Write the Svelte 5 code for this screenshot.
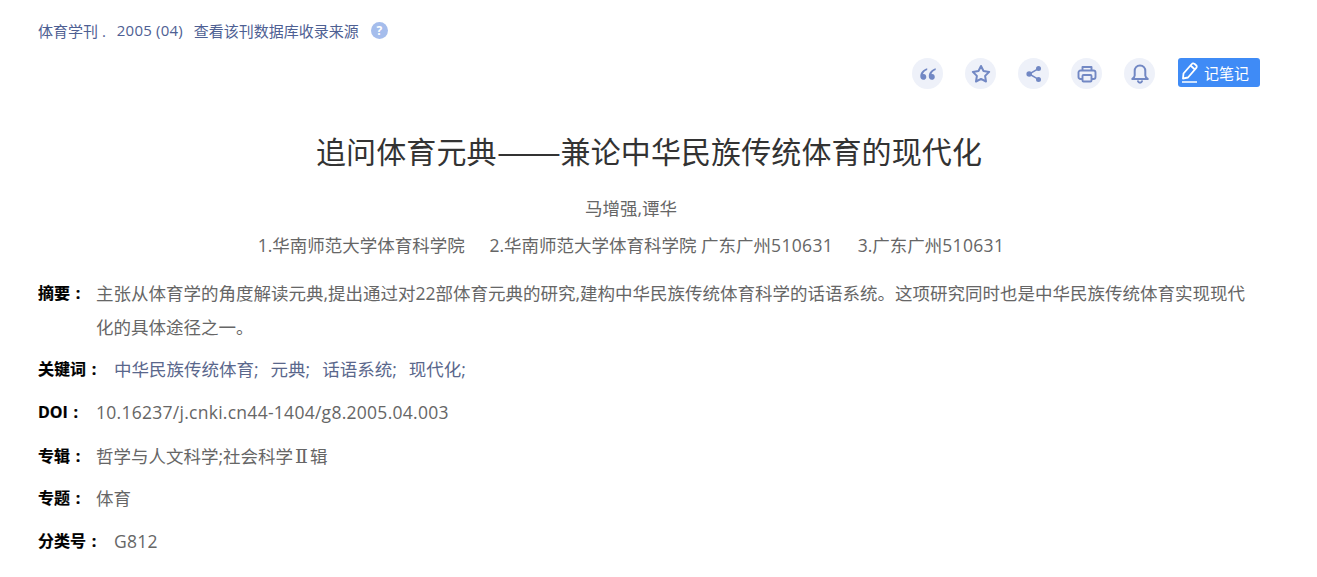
<script>
    let keywords = ["中华民族传统体育;", "元典;", "话语系统;", "现代化;"];
</script>

<div class="brief">
    <div class="top-tip">
        <a href="#a" class="src">体育学刊 .</a>
        <a href="#a" class="vol">2005 (04)</a>
        <a href="#a" class="db">查看该刊数据库收录来源</a>
        <span class="help">?</span>
    </div>

    <div class="tools">
        <button class="tool" aria-label="引用">
            <svg width="18" height="18" viewBox="0 0 18 18"><path fill="#7288c4" d="M8.200 3.200C4.300 4.400 1.300 7.300 1.300 11.300c0 2.100 1.200 3.500 3 3.500 1.700 0 3-1.200 3-2.900 0-1.600-1.100-2.800-2.600-2.800-.3 0-.6 0-.8.100.4-1.600 2-3.200 4.300-4.200zM16.700 3.200c-3.900 1.200-6.900 4.100-6.900 8.100 0 2.100 1.200 3.500 3 3.500 1.700 0 3-1.200 3-2.900 0-1.600-1.100-2.800-2.600-2.800-.3 0-.6 0-.8.100.4-1.600 2-3.200 4.300-4.200z"/></svg>
        </button>
        <button class="tool" aria-label="收藏">
            <svg width="20" height="20" viewBox="0 0 20 20"><path fill="none" stroke="#7288c4" stroke-width="2" stroke-linejoin="round" d="M10 2l2.500 5 5.700.9-4.100 4 .9 5.600-5-2.600-5 2.600.9-5.600-4.100-4 5.700-.9z"/></svg>
        </button>
        <button class="tool" aria-label="分享">
            <svg width="18" height="18" viewBox="0 0 18 18"><g fill="#7288c4"><circle cx="4.200" cy="9" r="2.800"/><circle cx="13.500" cy="3.600" r="2.500"/><circle cx="13.500" cy="14.400" r="2.500"/></g><path stroke="#7288c4" stroke-width="1.500" d="M13.500 3.600L4.200 9l9.300 5.400" fill="none"/></svg>
        </button>
        <button class="tool" aria-label="打印">
            <svg width="20" height="20" viewBox="0 0 20 20"><g fill="none" stroke="#7288c4" stroke-width="1.900" stroke-linejoin="round"><path d="M5.500 6.500V3h9v3.500"/><path d="M5.500 15H3.500a2 2 0 0 1-2-2V8.500a2 2 0 0 1 2-2h13a2 2 0 0 1 2 2V13a2 2 0 0 1-2 2h-2"/><rect x="5.500" y="11" width="9" height="6.500" rx="1"/></g></svg>
        </button>
        <button class="tool" aria-label="提醒">
            <svg width="20" height="20" viewBox="0 0 20 20"><g fill="none" stroke="#7288c4" stroke-width="2" stroke-linejoin="round"><path d="M10 1.500c-3.400 0-5.300 2.500-5.300 5.500v4.500c0 1.200-.9 2.300-2.500 3.500h15.600c-1.600-1.200-2.500-2.300-2.500-3.500V7c0-3-1.900-5.500-5.300-5.500z"/><path d="M8 17.300c.3 1 1 1.400 2 1.400s1.700-.4 2-1.400" stroke-linecap="round"/></g></svg>
        </button>
        <button class="note">
            <svg width="18" height="21" viewBox="0 0 18 21"><g fill="none" stroke="#fff" stroke-width="1.800" stroke-linejoin="round"><path d="M2.500 11.500L10.800 2a1.800 1.800 0 0 1 2.600-.2l1.700 1.400a1.800 1.800 0 0 1 .2 2.600L7 15.500l-5 1z"/><path d="M9.500 3.500l4.500 4"/></g><path stroke="#fff" stroke-width="1.500" d="M1 20h15"/></svg>
            <span>记笔记</span>
        </button>
    </div>

    <h1>追问体育元典<span class="dash">——</span>兼论中华民族传统体育的现代化</h1>
    <div class="authors">马增强,谭华</div>
    <div class="orgs">
        <span>1.华南师范大学体育科学院</span>
        <span>2.华南师范大学体育科学院 广东广州<b>510631</b></span>
        <span>3.广东广州<b>510631</b></span>
    </div>

    <div class="row abstract">
        <span class="label">摘要<i>:</i></span>
        <p>主张从体育学的角度解读元典,提出通过对22部体育元典的研究,建构中华民族传统体育科学的话语系统。这项研究同时也是中华民族传统体育实现现代化的具体途径之一。</p>
    </div>
    <div class="row keywords">
        <span class="label wide">关键词<i>:</i></span>
        <div class="kw">
            {#each keywords as k}
                <a href="#a">{k}</a>
            {/each}
        </div>
    </div>
    <div class="row doi">
        <span class="label">DOI<i>:</i></span>
        <span class="value latin">10.16237/j.cnki.cn44-1404/g8.2005.04.003</span>
    </div>
    <div class="row album">
        <span class="label">专辑<i>:</i></span>
        <span class="value">哲学与人文科学;社会科学<span class="roman">Ⅱ</span>辑</span>
    </div>
    <div class="row topic">
        <span class="label">专题<i>:</i></span>
        <span class="value">体育</span>
    </div>
    <div class="row clc">
        <span class="label wide">分类号<i>:</i></span>
        <span class="value latin">G812</span>
    </div>
</div>

<style>
    :global(body) { background: #fff; margin: 0; }
    .brief { width: 1222px; height: 577px; box-sizing: border-box; margin-left: 38px; padding-top: 20px; overflow: hidden; font-family: "Open Sans", "Noto Sans CJK SC", sans-serif; color: #666; }

    .top-tip { display: flex; align-items: center; height: 20px; font-size: 15px; color: #4e6093; }
    .top-tip a { color: #4e6093; text-decoration: none; margin-right: 10px; }
    .top-tip .src { margin-right: 11px; }
    .top-tip .vol { margin-right: 11px; letter-spacing: 0.2px; }
    .top-tip .db { margin-right: 11px; }
    .help { width: 17px; height: 17px; margin-left: 1px; border-radius: 50%; background: #a5bdec; color: #fff; font-size: 12px; font-weight: bold; line-height: 17px; text-align: center; }

    .tools { display: flex; justify-content: flex-end; align-items: flex-start; margin-top: 18px; height: 32px; }
    .tool { width: 31px; height: 31px; padding: 0; margin-right: 22px; border: none; border-radius: 50%; background: #eef1f9; display: flex; align-items: center; justify-content: center; }
    .note { width: 82px; height: 29px; margin-left: 1px; padding: 0 0 0 3px; border: none; border-radius: 3px; background: #3f8bf6; color: #fff; font-family: inherit; font-size: 15px; display: flex; align-items: center; gap: 5px; }

    h1 { margin: 38px 0 0; font-size: 30px; font-weight: 400; line-height: 44px; text-align: center; color: #333; letter-spacing: 0.1px; }
    .dash { display: inline-block; width: 64px; font-family: "Noto Sans CJK SC", sans-serif; letter-spacing: 0; text-align: center; transform: scaleX(1.28); }
    .authors { margin-top: 21px; padding-right: 36px; font-size: 17.5px; line-height: 26px; text-align: center; }
    .orgs { margin-top: 11px; padding-right: 36px; font-size: 17.5px; line-height: 26px; text-align: center; }
    .orgs > span { margin: 0 10px; }
    .orgs b { font-weight: 400; letter-spacing: 0.33px; }

    .row { display: flex; font-size: 17.5px; line-height: 26px; margin-top: 17px; }
    .label { flex: none; width: 58px; font-size: 16px; font-weight: 700; color: #000; -webkit-text-stroke: 0.2px #000; }
    .label.wide { width: 76px; }
    .label i { display: inline-block; width: 16px; font-style: normal; text-align: center; }
    .abstract { margin-top: 18px; line-height: 34px; }
    .abstract p { margin: 0; }
    .keywords { margin-top: 12px; }
    .doi { margin-top: 17px; }
    .album { margin-top: 18px; }
    .topic { margin-top: 16px; }
    .kw a { color: #5a678c; text-decoration: none; margin-right: 12px; }
    .latin { letter-spacing: 0.27px; }
    .roman { font-family: "DejaVu Serif", serif; font-size: 19px; line-height: 1; margin: 0 2px; }
</style>
